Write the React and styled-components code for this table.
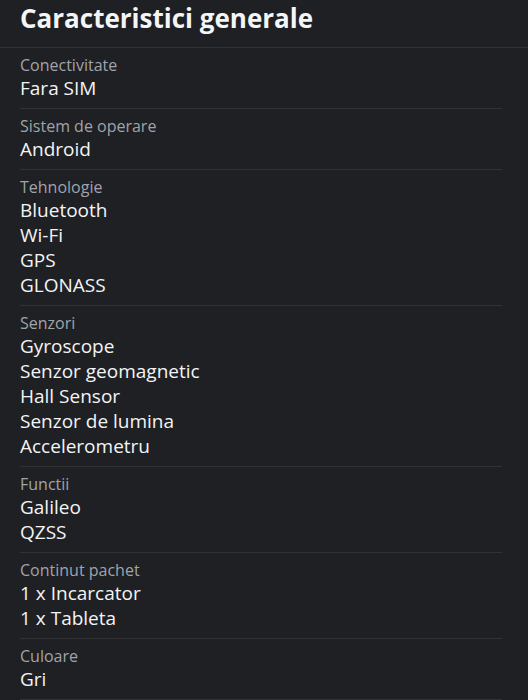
import React from "react";
import styled, { createGlobalStyle } from "styled-components";

const GlobalStyle = createGlobalStyle`
  html, body {
    margin: 0;
    padding: 0;
    background: #1e2024;
  }
  body {
    font-family: "Open Sans", "Noto Sans", sans-serif;
  }
`;

const Page = styled.div`
  width: 528px;
  height: 700px;
  overflow: hidden;
  background: #1e2024;
  color: #f1f2f3;
`;

const Header = styled.div`
  height: 47px;
  padding: 0 20px;
  display: flex;
  align-items: center;
  border-bottom: 1px solid #303237;
  h2 {
    margin: 0;
    margin-top: -11px;
    font-size: 26px;
    font-weight: 700;
    color: #f4f5f6;
  }
`;

const List = styled.div`
  display: flex;
  flex-direction: column;
  padding: 0 26px 0 20px;
`;

const Section = styled.div`
  padding: 7px 0 7px;
  border-bottom: 1px solid #2f3135;
  display: flex;
  flex-direction: column;
  .label {
    font-size: 16px;
    line-height: 21px;
    color: #a0a4aa;
  }
  .value {
    font-size: 19px;
    line-height: 25px;
    color: #f3f4f5;
  }
`;

const specs = [
  { label: "Conectivitate", values: ["Fara SIM"] },
  { label: "Sistem de operare", values: ["Android"] },
  { label: "Tehnologie", values: ["Bluetooth", "Wi-Fi", "GPS", "GLONASS"] },
  {
    label: "Senzori",
    values: [
      "Gyroscope",
      "Senzor geomagnetic",
      "Hall Sensor",
      "Senzor de lumina",
      "Accelerometru",
    ],
  },
  { label: "Functii", values: ["Galileo", "QZSS"] },
  { label: "Continut pachet", values: ["1 x Incarcator", "1 x Tableta"] },
  { label: "Culoare", values: ["Gri"] },
];

export default function App() {
  return (
    <Page>
      <GlobalStyle />
      <Header>
        <h2>Caracteristici generale</h2>
      </Header>
      <List>
        {specs.map((s) => (
          <Section key={s.label}>
            <span className="label">{s.label}</span>
            {s.values.map((v) => (
              <span className="value" key={v}>
                {v}
              </span>
            ))}
          </Section>
        ))}
      </List>
    </Page>
  );
}
